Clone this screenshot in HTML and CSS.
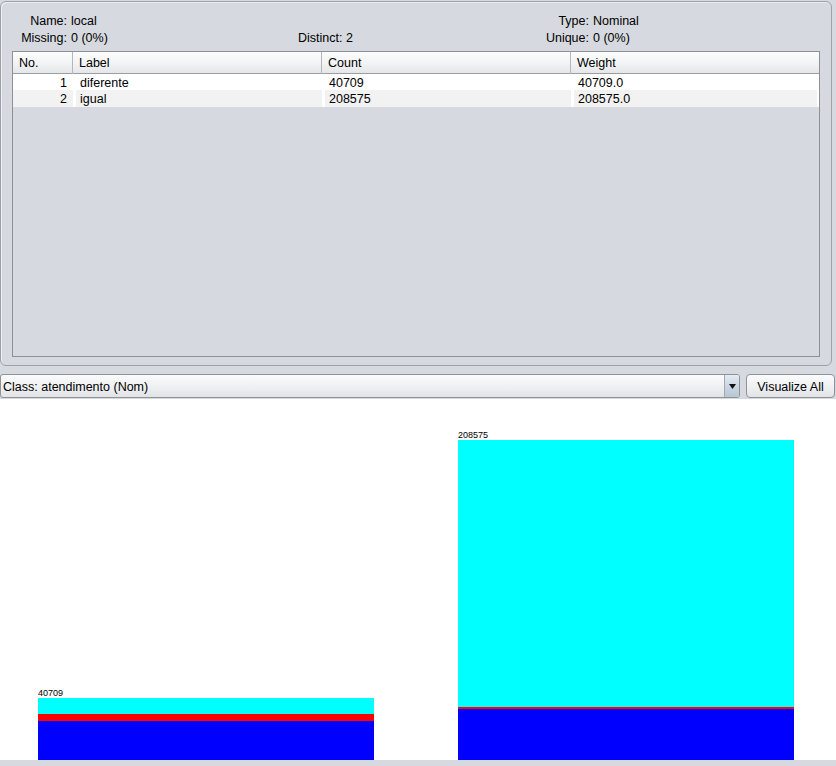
FILE: index.html
```html
<!DOCTYPE html>
<html>
<head>
<meta charset="utf-8">
<link rel="stylesheet" href="styles.css">
</head>
<body>
<div class="panel">
  <div class="info">
    <span class="lbl">Name:</span><span class="val">local</span><span></span><span class="lbl">Type:</span><span class="val">Nominal</span>
    <span class="lbl">Missing:</span><span class="val">0 (0%)</span><span class="distinct">Distinct: 2</span><span class="lbl">Unique:</span><span class="val">0 (0%)</span>
  </div>
  <div class="table">
    <div class="thead">
      <div class="th">No.</div><div class="th">Label</div><div class="th">Count</div><div class="th last">Weight</div>
    </div>
    <div class="row">
      <div class="td num">1</div><div class="td">diferente</div><div class="td">40709</div><div class="td">40709.0</div>
    </div>
    <div class="row alt">
      <div class="td num">2</div><div class="td">igual</div><div class="td">208575</div><div class="td">208575.0</div>
    </div>
  </div>
</div>
<div class="controls">
  <div class="combo">
    <span class="combo-text">Class: atendimento (Nom)</span>
    <span class="combo-arrow"><svg width="7" height="5" viewBox="0 0 7 5"><path d="M0 0H7L3.5 5Z" fill="#111"/></svg></span>
  </div>
  <div class="button">Visualize All</div>
</div>
<div class="chart">
  <div class="bar">
    <div class="bar-label">40709</div>
    <div class="seg cyan" style="height:16px"></div>
    <div class="seg red" style="height:7px"></div>
    <div class="seg blue" style="height:39px"></div>
  </div>
  <div class="bar">
    <div class="bar-label">208575</div>
    <div class="seg cyan" style="height:267px"></div>
    <div class="seg red" style="height:2px"></div>
    <div class="seg blue" style="height:51px"></div>
  </div>
</div>
<div class="footer"></div>
</body>
</html>
```
FILE: styles.css
```css
* { box-sizing: border-box; }
html, body {
  margin: 0;
  padding: 0;
  background: #d6d9df;
  font-family: "Liberation Sans", Arial, sans-serif;
  font-size: 12.5px;
  color: #000;
}
body { width: 836px; height: 766px; overflow: hidden; }

.panel {
  margin: 1px 4px 0 0;
  width: 832px;
  border: 1px solid #9ea2a8;
  border-radius: 6px;
  padding: 11px 11px 8px 11px;
  box-shadow: inset 1px 1px 0 #eceef1;
}

.info {
  display: grid;
  grid-template-columns: 55px 231px 244px 47px 1fr;
  grid-auto-rows: 17px;
  line-height: 17px;
  margin-left: -11px;
  padding-left: 11px;
  margin-bottom: 4px;
  white-space: nowrap;
}
.info .lbl { text-align: right; }
.info .val { padding-left: 4px; }

.table {
  width: 808px;
  height: 306px;
  border: 1px solid #8d9095;
  background: #d6d9df;
}
.thead {
  display: grid;
  grid-template-columns: 60px 249px 249px 248px;
  height: 22px;
  background: linear-gradient(#fdfdfd, #f3f4f5 50%, #e4e6e9);
  border-bottom: 1px solid #9a9da2;
}
.th {
  line-height: 21px;
  padding: 1px 0 0 6px;
  border-right: 1px solid #b4b7bc;
}
.th.last { border-right: none; padding-left: 6px; }
.row {
  display: grid;
  grid-template-columns: 60px 249px 249px 248px;
  height: 16px;
  line-height: 16px;
  background: #fff;
}
.td { padding: 1px 0 0 7px; white-space: nowrap; }
.td.num { text-align: right; padding: 1px 6px 0 0; }
.row.alt .td { background: #f2f2f2; border-left: 3px solid #fff; padding-left: 4px; }
.row.alt .td.num { border-left: none; padding-right: 6px; }
.row.alt .td:last-child { border-right: 2px solid #fff; }

.controls {
  display: flex;
  gap: 6px;
  margin-top: 8px;
  height: 24px;
  margin-bottom: 1px;
}
.combo {
  width: 740px;
  height: 24px;
  display: flex;
  align-items: stretch;
  border: 1px solid #8f9297;
  border-radius: 3px;
  background: linear-gradient(#fbfbfc, #eef0f2 55%, #e1e3e6);
  overflow: hidden;
}
.combo-text {
  flex: 1;
  padding: 1px 0 0 2px;
  line-height: 22px;
  white-space: nowrap;
}
.combo-arrow {
  width: 15px;
  display: flex;
  align-items: center;
  justify-content: center;
  border-left: 1px solid #a2a9b2;
  background: linear-gradient(#e4ebf2, #c9d5e1 55%, #b8c6d4);
}
.button {
  width: 89px;
  height: 24px;
  border: 1px solid #8f9297;
  border-radius: 4px;
  background: linear-gradient(#fbfbfc, #eef0f2 55%, #e1e3e6);
  text-align: center;
  padding-top: 1px;
  line-height: 22px;
  white-space: nowrap;
}

.chart {
  height: 361px;
  background: #fff;
  display: flex;
  align-items: flex-end;
  padding-left: 38px;
  gap: 84px;
}
.bar {
  width: 336px;
  display: flex;
  flex-direction: column;
}
.bar-label {
  font-size: 9px;
  line-height: 9px;
  height: 9px;
  white-space: nowrap;
}
.seg { width: 336px; }
.cyan { background: #00ffff; }
.red { background: #ff0000; }
.blue { background: #0000ff; }
.footer { height: 6px; background: #d6d9df; }
```
